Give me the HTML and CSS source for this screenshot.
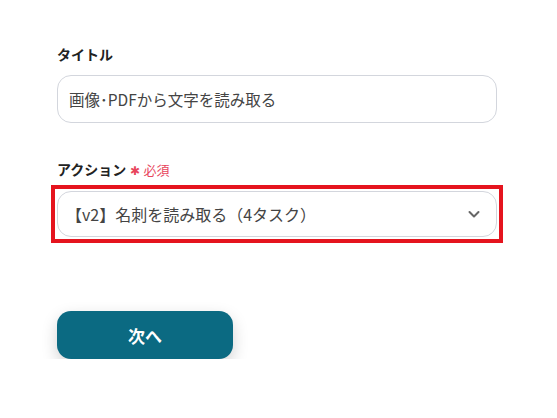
FILE: index.html
```html
<!DOCTYPE html>
<html lang="ja">
<head>
    <meta charset="UTF-8">
    <meta name="viewport" content="width=device-width, initial-scale=1.0">
    <title>設定</title>
    <link rel="stylesheet" href="styles.css">
</head>
<body>
    <div class="form">
        <div class="field">
            <div class="label">タイトル</div>
            <div class="input title-input">画像･PDFから文字を読み取る</div>
        </div>
        <div class="field field-action">
            <div class="label">アクション <span class="required"><span class="star">✱</span> 必須</span></div>
            <div class="highlight">
                <div class="input select">
                    <span>【v2】名刺を読み取る（4タスク）</span>
                    <svg class="chevron" width="14" height="14" viewBox="0 0 14 14"><path d="M2.5 5 L7 9.5 L11.5 5" fill="none" stroke="#666" stroke-width="2" stroke-linecap="round" stroke-linejoin="round"/></svg>
                </div>
            </div>
        </div>
        <button class="next-button">次へ</button>
    </div>
</body>
</html>
```

FILE: styles.css
```css
body { margin: 0; background: #fff; font-family: "Noto Sans CJK JP", "Noto Sans", sans-serif; color: #222; }
.form { padding: 44px 60px 0 57px; width: 440px; }
.label { font-size: 14px; font-weight: bold; line-height: 20px; margin-bottom: 11px; color: #222; }
.input { box-sizing: border-box; height: 48px; border: 1px solid #d3d6dd; border-radius: 14px; padding: 0 12px; display: flex; align-items: center; font-size: 16px; color: #444; background: #fff; }
.title-input { font-size: 15.5px; padding-left: 11px; }
.field-action { margin-top: 36px; }
.field-action .label { margin-bottom: 5px; }
.required { color: #e8455c; font-size: 13px; font-weight: normal; margin-left: 1px; }
.star { font-size: 12px; }
.highlight { border: 4px solid #e5141e; padding: 2px; margin: 0 -6px; }
.select { height: 46px; justify-content: space-between; padding: 0 15px 0 8px; }
.chevron { display: block; }
.next-button { margin-top: 68px; width: 176px; height: 48px; border: none; border-radius: 14px; background: #0b6a82; color: #fff; font-family: inherit; font-size: 17px; font-weight: bold; box-shadow: 0 6px 16px rgba(0, 0, 0, 0.18); cursor: pointer; }
```
